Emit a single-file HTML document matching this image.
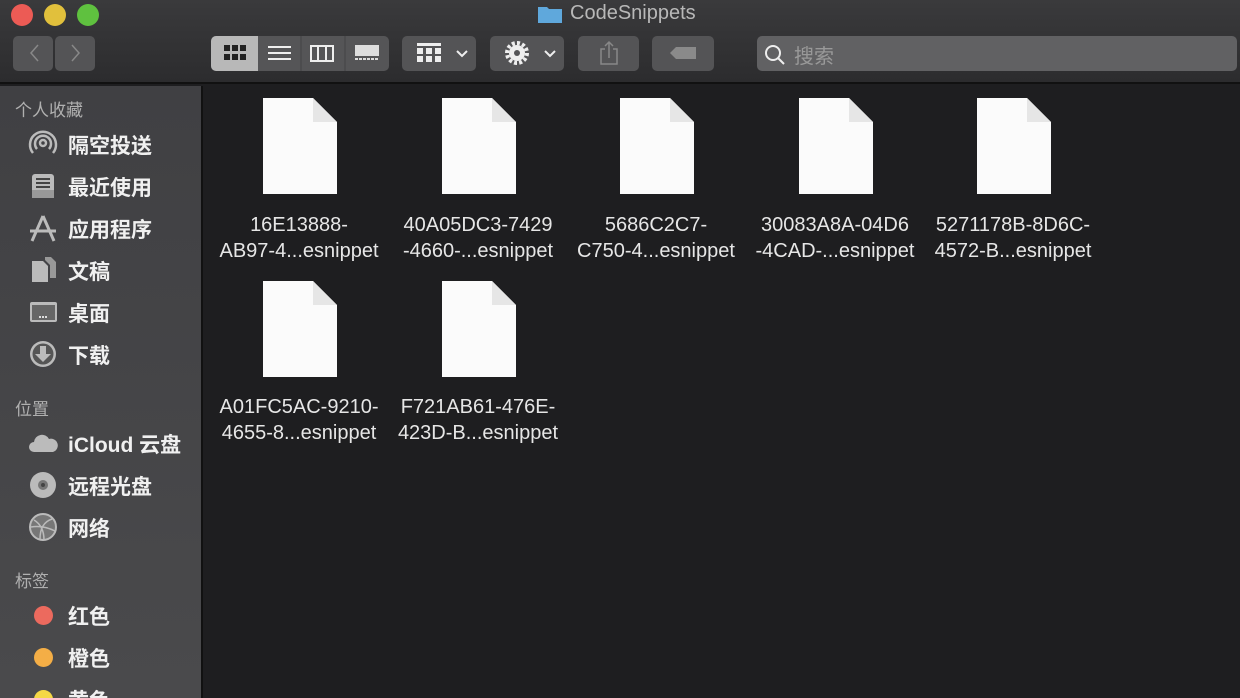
<!DOCTYPE html>
<html><head><meta charset="utf-8"><style>
*{margin:0;padding:0;box-sizing:border-box}
html,body{width:1240px;height:698px;overflow:hidden}
body{background:#1e1e20;font-family:"Liberation Sans","Noto Sans CJK SC",sans-serif;position:relative}
.top{position:absolute;left:0;top:0;width:1240px;height:84px;background:linear-gradient(#3a3a3c,#2c2c2e);border-bottom:2px solid #111}
.dot{position:absolute;top:4px;width:22px;height:22px;border-radius:50%}
.btn{position:absolute;top:36px;height:35px;background:#545456;border-radius:5px}
.side{position:absolute;left:0;top:86px;width:203px;height:612px;overflow:hidden;background:linear-gradient(#404043,#4a4a4c);border-right:2px solid #111}
.h{position:absolute;left:15px;font-size:17px;color:#b0b0b0}
.it{position:absolute;left:68px;font-size:21px;color:#f0f0f0;font-weight:bold}
.ic{position:absolute;left:28px;width:30px;height:30px}
.f{position:absolute;width:74px;height:96px}
.lb{position:absolute;width:178px;text-align:center;font-size:20px;color:#e6e6e6;line-height:26px}
</style></head><body>
<div class="top">
<div class="dot" style="left:11px;background:#ec5b55"></div>
<div class="dot" style="left:44px;background:#e1c03c"></div>
<div class="dot" style="left:77px;background:#5fc13f"></div>
<svg style="position:absolute;left:537px;top:4px" width="26" height="20"><path d="M1 3h9l2 2h13v14H1z" fill="#5fa8dc"/></svg>
<div style="position:absolute;left:570px;top:2px;font-size:20px;color:#b8b8b8">CodeSnippets</div>
<div class="btn" style="left:13px;width:40px"></div>
<div class="btn" style="left:55px;width:40px"></div>
<svg style="position:absolute;left:13px;top:36px" width="84" height="35"><path d="M25 9l-7 8 7 8M59 9l7 8-7 8" stroke="#888" stroke-width="1.5" fill="none"/></svg>
<div class="btn" style="left:211px;width:178px;background:#555557"></div>
<div class="btn" style="left:211px;width:47px;background:#b8b8b8;border-radius:5px 0 0 5px"></div>
<svg style="position:absolute;left:211px;top:36px" width="180" height="35">
<g fill="#222"><rect x="13" y="9" width="6" height="6"/><rect x="21" y="9" width="6" height="6"/><rect x="29" y="9" width="6" height="6"/><rect x="13" y="18" width="6" height="6"/><rect x="21" y="18" width="6" height="6"/><rect x="29" y="18" width="6" height="6"/></g>
<g stroke="#eee" stroke-width="2"><path d="M57 11h23M57 17h23M57 23h23"/><rect x="100" y="10" width="22" height="15" fill="none"/><path d="M107 10v15M115 10v15"/></g>
<rect x="144" y="9" width="24" height="11" fill="#ddd"/><path d="M144 23h24" stroke="#ddd" stroke-width="2" stroke-dasharray="3 1"/>
<path d="M90 0v35M134 0v35" stroke="#444"/></svg>
<div class="btn" style="left:402px;width:74px"></div>
<svg style="position:absolute;left:402px;top:36px" width="74" height="35"><g fill="#eee"><rect x="15" y="7" width="24" height="3"/><rect x="15" y="12" width="6" height="6"/><rect x="24" y="12" width="6" height="6"/><rect x="33" y="12" width="6" height="6"/><rect x="15" y="20" width="6" height="6"/><rect x="24" y="20" width="6" height="6"/><rect x="33" y="20" width="6" height="6"/></g><path d="M55 15l5 5 5-5" stroke="#eee" stroke-width="2" fill="none"/></svg>
<div class="btn" style="left:490px;width:74px"></div>
<svg style="position:absolute;left:490px;top:36px" width="74" height="35"><circle cx="27" cy="17" r="8" fill="#eee"/><circle cx="27" cy="17" r="10" fill="none" stroke="#eee" stroke-width="4" stroke-dasharray="3 2.2"/><circle cx="27" cy="17" r="3" fill="#545456"/><path d="M55 15l5 5 5-5" stroke="#eee" stroke-width="2" fill="none"/></svg>
<div class="btn" style="left:578px;width:61px"></div>
<svg style="position:absolute;left:578px;top:36px" width="61" height="35"><path d="M27 13h-4v15h16V13h-4M31 22V6M27 10l4-4 4 4" stroke="#888" stroke-width="1.5" fill="none"/></svg>
<div class="btn" style="left:652px;width:62px"></div>
<svg style="position:absolute;left:652px;top:36px" width="62" height="35"><path d="M18 17l6-6h20v12H24z" fill="#8a8a8a"/></svg>
<div class="btn" style="left:757px;width:480px;background:#616163"></div>
<svg style="position:absolute;left:764px;top:44px" width="24" height="24"><circle cx="9" cy="9" r="7" stroke="#eee" stroke-width="2" fill="none"/><path d="M14 14l6 6" stroke="#eee" stroke-width="2"/></svg>
<div style="position:absolute;left:794px;top:40px;font-size:20px;color:#999">搜索</div>
</div>
<div class="side">
<div class="h" style="top:10px">个人收藏</div>
<svg class="ic" style="top:43px" viewBox="0 0 30 30"><g stroke="#bbb" stroke-width="2.5" fill="none"><circle cx="15" cy="14" r="3"/><path d="M9 20a8 8 0 1 1 12 0M5 24a13 13 0 1 1 20 0"/></g></svg>
<div class="it" style="top:44px">隔空投送</div>
<svg class="ic" style="top:85px" viewBox="0 0 30 30"><rect x="4" y="3" width="22" height="24" rx="3" fill="#bbb"/><path d="M8 8h14M8 12h14M8 16h14" stroke="#444" stroke-width="2"/><rect x="4" y="19" width="22" height="8" fill="#999"/></svg>
<div class="it" style="top:86px">最近使用</div>
<svg class="ic" style="top:127px" viewBox="0 0 30 30"><path d="M15 3L4 28M15 3l11 25M2 18h26" stroke="#bbb" stroke-width="3" fill="none"/></svg>
<div class="it" style="top:128px">应用程序</div>
<svg class="ic" style="top:169px" viewBox="0 0 30 30"><path d="M4 6h11l5 5v16H4z" fill="#bbb"/><path d="M17 2h6l5 5v16h-6V10l-5-5z" fill="#999"/></svg>
<div class="it" style="top:170px">文稿</div>
<svg class="ic" style="top:211px" viewBox="0 0 30 30"><rect x="2" y="5" width="27" height="20" rx="2" fill="#bbb"/><rect x="4" y="8" width="23" height="15" fill="#666"/><path d="M11 20h2M14 20h2M17 20h2" stroke="#ddd" stroke-width="2"/></svg>
<div class="it" style="top:212px">桌面</div>
<svg class="ic" style="top:253px" viewBox="0 0 30 30"><circle cx="15" cy="15" r="13" fill="#bbb"/><circle cx="15" cy="15" r="10.5" fill="#555"/><path d="M12 7h6v8h5l-8 8-8-8h5z" fill="#bbb"/></svg>
<div class="it" style="top:254px">下载</div>
<div class="h" style="top:309px">位置</div>
<svg class="ic" style="top:342px" viewBox="0 0 30 30"><path d="M6 24a5 5 0 0 1 0-10 8 8 0 0 1 15-3 6 6 0 0 1 4 13z" fill="#bbb"/></svg>
<div class="it" style="top:343px">iCloud 云盘</div>
<svg class="ic" style="top:384px" viewBox="0 0 30 30"><circle cx="15" cy="15" r="13" fill="#bbb"/><circle cx="15" cy="15" r="5" fill="#777"/><circle cx="15" cy="15" r="2" fill="#444"/></svg>
<div class="it" style="top:385px">远程光盘</div>
<svg class="ic" style="top:426px" viewBox="0 0 30 30"><circle cx="15" cy="15" r="13" fill="#777" stroke="#bbb" stroke-width="2"/><path d="M6 8q10 6 10 20M24 7q-12 4-12 20M3 15q12-2 24 4" stroke="#bbb" stroke-width="1.5" fill="none"/></svg>
<div class="it" style="top:427px">网络</div>
<div class="h" style="top:481px">标签</div>
<div style="position:absolute;left:34px;top:520px;width:19px;height:19px;border-radius:50%;background:#ec6a5e"></div>
<div class="it" style="top:515px">红色</div>
<div style="position:absolute;left:34px;top:562px;width:19px;height:19px;border-radius:50%;background:#f4ae46"></div>
<div class="it" style="top:557px">橙色</div>
<div style="position:absolute;left:34px;top:604px;width:19px;height:19px;border-radius:50%;background:#f5d845"></div>
<div class="it" style="top:599px">黄色</div>
</div>
<svg width="0" height="0" style="position:absolute"><defs><g id="doc"><path d="M0 0h50l24 24v72H0z" fill="#fbfbfb"/><path d="M50 0v24h24" fill="#e6e6e6"/></g></defs></svg>
<svg class="f" style="left:263px;top:98px"><use href="#doc"/></svg>
<svg class="f" style="left:442px;top:98px"><use href="#doc"/></svg>
<svg class="f" style="left:620px;top:98px"><use href="#doc"/></svg>
<svg class="f" style="left:799px;top:98px"><use href="#doc"/></svg>
<svg class="f" style="left:977px;top:98px"><use href="#doc"/></svg>
<svg class="f" style="left:263px;top:281px"><use href="#doc"/></svg>
<svg class="f" style="left:442px;top:281px"><use href="#doc"/></svg>
<div class="lb" style="left:210px;top:212px">16E13888-<br>AB97-4...esnippet</div>
<div class="lb" style="left:389px;top:212px">40A05DC3-7429<br>-4660-...esnippet</div>
<div class="lb" style="left:567px;top:212px">5686C2C7-<br>C750-4...esnippet</div>
<div class="lb" style="left:746px;top:212px">30083A8A-04D6<br>-4CAD-...esnippet</div>
<div class="lb" style="left:924px;top:212px">5271178B-8D6C-<br>4572-B...esnippet</div>
<div class="lb" style="left:210px;top:394px">A01FC5AC-9210-<br>4655-8...esnippet</div>
<div class="lb" style="left:389px;top:394px">F721AB61-476E-<br>423D-B...esnippet</div>
</body></html>
